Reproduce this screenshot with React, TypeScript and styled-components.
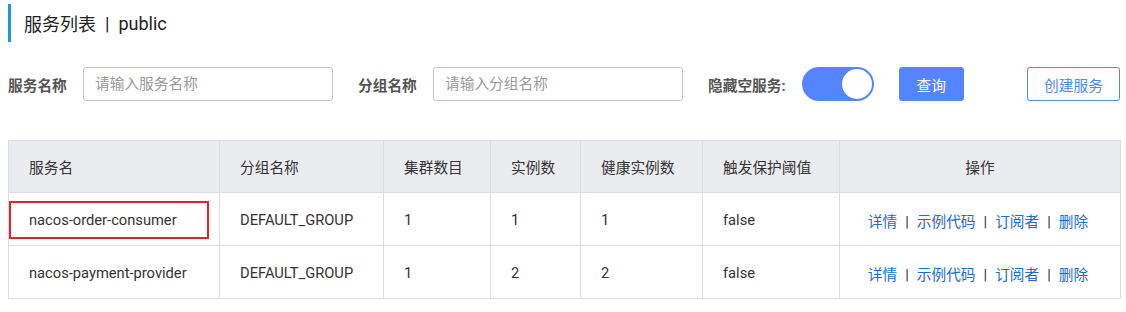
import styled, { createGlobalStyle } from "styled-components";

const Global = createGlobalStyle`
  body {
    margin: 0;
    background: #fff;
    font-family: Roboto, "Noto Sans CJK SC", sans-serif;
    color: #333;
  }
`;

const Page = styled.div`
  padding: 4px 6px 0 8px;
`;

const Title = styled.h1`
  margin: 0;
  height: 38px;
  display: flex;
  align-items: center;
  padding-left: 13px;
  border-left: 3px solid #1a9ad6;
  font-size: 18px;
  font-weight: 400;
  color: #222;
`;

const Sep = styled.span`
  margin: 0 9px;
`;

const Form = styled.div`
  display: flex;
  align-items: center;
  margin-top: 25px;
  height: 34px;
`;

const Label = styled.label`
  width: 75px;
  font-size: 14.7px;
  font-weight: 700;
  color: #555;
`;

const Input = styled.input`
  box-sizing: border-box;
  width: 250px;
  height: 34px;
  margin-right: 25px;
  padding: 0 11px;
  border: 1px solid #c4c6cf;
  border-radius: 3px;
  font-family: inherit;
  font-size: 14.7px;
  color: #333;
  outline: none;

  &::placeholder {
    color: #999;
  }
`;

const SwitchLabel = styled(Label)`
  width: auto;
  margin-right: 16px;
`;

const Switch = styled.span`
  box-sizing: border-box;
  width: 72px;
  height: 34px;
  border-radius: 17px;
  background: #5584ff;
  display: flex;
  align-items: center;
  justify-content: flex-end;
  padding: 2px;
  margin-right: 25px;
`;

const Knob = styled.span`
  width: 30px;
  height: 30px;
  border-radius: 50%;
  background: #fff;
`;

const Button = styled.button<{ $primary?: boolean }>`
  box-sizing: border-box;
  height: 34px;
  padding: 0 ${(p) => (p.$primary ? "17px" : "16px")};
  border-radius: 3px;
  border: 1px solid #5584ff;
  background: ${(p) => (p.$primary ? "#5584ff" : "#fff")};
  color: ${(p) => (p.$primary ? "#fff" : "#5584ff")};
  font-family: inherit;
  font-size: 14.7px;
  cursor: pointer;
`;

const CreateButton = styled(Button)`
  margin-left: auto;
  width: 93px;
  padding: 0;
`;

const Table = styled.table`
  margin-top: 39px;
  width: 100%;
  border-collapse: collapse;
  border: 1px solid #dcdee3;
  font-size: 14.7px;
  table-layout: fixed;
`;

const Th = styled.th<{ $center?: boolean }>`
  height: 51px;
  padding: ${(p) => (p.$center ? "0" : "0 0 0 20px")};
  background: #ebecf0;
  border: 1px solid #dcdee3;
  font-weight: 400;
  text-align: ${(p) => (p.$center ? "center" : "left")};
  color: #333;
`;

const Td = styled.td<{ $center?: boolean }>`
  position: relative;
  height: 50px;
  padding: ${(p) => (p.$center ? "2px 4px 0 0" : "2px 0 0 20px")};
  border: 1px solid #dcdee3;
  text-align: ${(p) => (p.$center ? "center" : "left")};
  color: #333;
`;

const Mark = styled.span`
  position: absolute;
  left: 0;
  top: 8px;
  width: 200px;
  height: 38px;
  box-sizing: border-box;
  border: 2px solid #e8202a;
`;

const Link = styled.a`
  color: #1a6bd8;
  text-decoration: none;
`;

const Pipe = styled.span`
  margin: 0 8px;
  color: #333;
`;

const columns = [
  { title: "服务名", width: 211 },
  { title: "分组名称", width: 164 },
  { title: "集群数目", width: 107 },
  { title: "实例数", width: 90 },
  { title: "健康实例数", width: 122 },
  { title: "触发保护阈值", width: 137 },
  { title: "操作", width: 281, center: true },
];

const rows = [
  { name: "nacos-order-consumer", group: "DEFAULT_GROUP", clusters: 1, count: 1, healthy: 1, threshold: "false", marked: true },
  { name: "nacos-payment-provider", group: "DEFAULT_GROUP", clusters: 1, count: 2, healthy: 2, threshold: "false" },
];

const actions = ["详情", "示例代码", "订阅者", "删除"];

export default function App() {
  return (
    <Page>
      <Global />
      <Title>
        服务列表<Sep>|</Sep>public
      </Title>

      <Form>
        <Label>服务名称</Label>
        <Input placeholder="请输入服务名称" />
        <Label>分组名称</Label>
        <Input placeholder="请输入分组名称" />
        <SwitchLabel>隐藏空服务:</SwitchLabel>
        <Switch>
          <Knob />
        </Switch>
        <Button $primary>查询</Button>
        <CreateButton>创建服务</CreateButton>
      </Form>

      <Table>
        <colgroup>
          {columns.map((c) => (
            <col key={c.title} style={{ width: c.width }} />
          ))}
        </colgroup>
        <thead>
          <tr>
            {columns.map((c) => (
              <Th key={c.title} $center={c.center}>
                {c.title}
              </Th>
            ))}
          </tr>
        </thead>
        <tbody>
          {rows.map((r) => (
            <tr key={r.name}>
              <Td>
                {r.marked && <Mark />}
                {r.name}
              </Td>
              <Td>{r.group}</Td>
              <Td>{r.clusters}</Td>
              <Td>{r.count}</Td>
              <Td>{r.healthy}</Td>
              <Td>{r.threshold}</Td>
              <Td $center>
                {actions.map((a, i) => (
                  <span key={a}>
                    {i > 0 && <Pipe>|</Pipe>}
                    <Link href="#">{a}</Link>
                  </span>
                ))}
              </Td>
            </tr>
          ))}
        </tbody>
      </Table>
    </Page>
  );
}
